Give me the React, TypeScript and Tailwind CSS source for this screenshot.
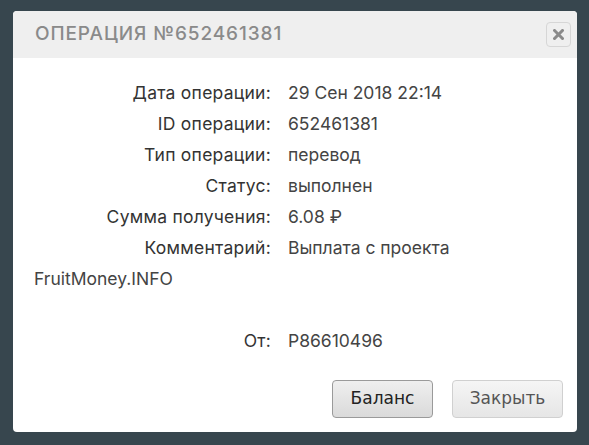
const rows = [
  { label: 'Дата операции:', value: '29 Сен 2018 22:14' },
  { label: 'ID операции:', value: '652461381' },
  { label: 'Тип операции:', value: 'перевод' },
  { label: 'Статус:', value: 'выполнен' },
  { label: 'Сумма получения:', value: '6.08 ₽' },
  { label: 'Комментарий:', value: 'Выплата с проекта' },
];

const Label = ({ children }: { children: React.ReactNode }) => (
  <span className="inline-block w-[254px] pr-[17px] text-right text-[#333] tracking-[0.25px]">{children}</span>
);

export default function App() {
  return (
    <div className="w-[589px] h-[445px] bg-[#37464e] pt-[11px] pl-[13px] overflow-hidden">
      <div className="w-[564px] h-[421px] bg-white rounded-[4px] overflow-hidden flex flex-col">
        <div className="h-[47px] bg-[#efefef] flex items-center justify-between pl-[22px] pr-[6px]">
          <h1 className="text-[19px] tracking-[0.9px] text-[#8a8a8a] font-[Inter,sans-serif] font-medium">
            ОПЕРАЦИЯ №652461381
          </h1>
          <button className="w-[25px] h-[25px] rounded-[4px] border border-[#d6d6d6] bg-[#efefef] flex items-center justify-center">
            <svg width="11" height="11" viewBox="0 0 11 11">
              <path d="M1.5 1.5 L9.5 9.5 M9.5 1.5 L1.5 9.5" stroke="#8a8a8a" strokeWidth="3" strokeLinecap="square" />
            </svg>
          </button>
        </div>

        <div className="pt-[19px] pl-[21px] pr-[20px] text-[17.5px] leading-[31px] text-[#444] font-[Inter,sans-serif]">
          {rows.map((r) => (
            <div key={r.label}>
              <Label>{r.label}</Label>
              <span>{r.value}</span>
            </div>
          ))}
          <div>FruitMoney.INFO</div>
          <div className="h-[31px]" />
          <div>
            <Label>От:</Label>
            <span>P86610496</span>
          </div>
        </div>

        <div className="mt-auto flex justify-end gap-[19px] pr-[14px] pb-[14px] font-['DejaVu_Sans',sans-serif] text-[17px]">
          <button className="w-[101px] h-[38px] rounded-[4px] border border-[#9a9a9a] bg-gradient-to-b from-[#efefef] to-[#dadada] text-[#222]">
            Баланс
          </button>
          <button className="w-[111px] h-[38px] rounded-[4px] border border-[#d0d0d0] bg-gradient-to-b from-[#f5f5f5] to-[#e6e6e6] text-[#555]">
            Закрыть
          </button>
        </div>
      </div>
    </div>
  );
}
